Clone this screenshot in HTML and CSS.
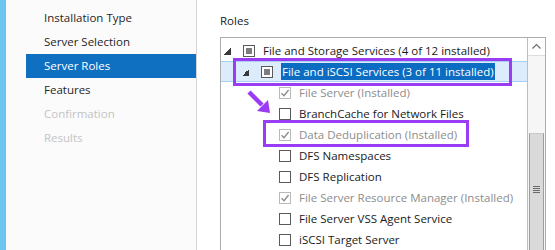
FILE: index.html
```html
<!DOCTYPE html>
<html>
<head>
<meta charset="utf-8">
<link rel="stylesheet" href="styles.css">
</head>
<body>
<div class="wizard">
  <nav class="steps">
    <ul>
      <li class="step">Installation Type</li>
      <li class="step">Server Selection</li>
      <li class="step active">Server Roles</li>
      <li class="step">Features</li>
      <li class="step disabled">Confirmation</li>
      <li class="step disabled">Results</li>
    </ul>
  </nav>
  <main class="content">
    <div class="section-title">Roles</div>
    <div class="tree-box">
      <div class="tree">
        <div class="row lvl0">
          <span class="expander"></span>
          <span class="cb partial"></span>
          <span class="label">File and Storage Services (4 of 12 installed)</span>
        </div>
        <div class="row lvl1 selected">
          <span class="expander"></span>
          <span class="cb partial"></span>
          <span class="label hl">File and iSCSI Services (3 of 11 installed)</span>
        </div>
        <div class="row lvl2 installed">
          <span class="cb checked"><svg viewBox="0 0 12 12"><path d="M2.5 6.2 L5 8.7 L9.6 3" /></svg></span>
          <span class="label">File Server (Installed)</span>
        </div>
        <div class="row lvl2">
          <span class="cb"></span>
          <span class="label">BranchCache for Network Files</span>
        </div>
        <div class="row lvl2 installed">
          <span class="cb checked"><svg viewBox="0 0 12 12"><path d="M2.5 6.2 L5 8.7 L9.6 3" /></svg></span>
          <span class="label">Data Deduplication (Installed)</span>
        </div>
        <div class="row lvl2">
          <span class="cb"></span>
          <span class="label">DFS Namespaces</span>
        </div>
        <div class="row lvl2">
          <span class="cb"></span>
          <span class="label">DFS Replication</span>
        </div>
        <div class="row lvl2 installed">
          <span class="cb checked"><svg viewBox="0 0 12 12"><path d="M2.5 6.2 L5 8.7 L9.6 3" /></svg></span>
          <span class="label">File Server Resource Manager (Installed)</span>
        </div>
        <div class="row lvl2">
          <span class="cb"></span>
          <span class="label">File Server VSS Agent Service</span>
        </div>
        <div class="row lvl2">
          <span class="cb"></span>
          <span class="label">iSCSI Target Server</span>
        </div>
      </div>
      <div class="scrollbar">
        <div class="scroll-btn"><svg viewBox="0 0 17 17"><path d="M4.5 10.5 L8.5 6.5 L12.5 10.5" /></svg></div>
        <div class="track">
          <div class="thumb"><span class="grip"></span></div>
        </div>
      </div>
    </div>
  </main>

  <div class="mark mark-services"></div>
  <div class="mark mark-dedup"></div>
  <svg class="arrow" viewBox="0 0 30 30"><path class="shaft" d="M2 2 L15 15" /><polygon points="10,21 23,23 21,10" /></svg>
</div>
</body>
</html>
```

FILE: styles.css
```css
* { box-sizing: border-box; }
html, body { margin: 0; padding: 0; }
body {
  width: 555px;
  height: 250px;
  overflow: hidden;
  background: #fff;
  font-family: "Segoe UI", "Open Sans", "Noto Sans", sans-serif;
  font-size: 11.5px;
  color: #1a1a1a;
}
.wizard {
  position: relative;
  display: flex;
  height: 250px;
  overflow: hidden;
}
.steps {
  width: 197px;
  flex: none;
  border-left: 6px solid #6cc6ee;
  border-right: 1px solid #d4d4d4;
  background: #fbfbfb;
}
.steps ul {
  list-style: none;
  margin: 0;
  padding: 6px 0 0 20px;
}
.step {
  height: 24px;
  line-height: 24px;
  padding-left: 18px;
  color: #262626;
}
.step.active {
  background: #0f6fc1;
  color: #fff;
}
.step.disabled { color: #c3c3c3; }

.content {
  flex: 1;
  padding: 12px 0 0 23px;
  background: #fff;
}
.section-title {
  line-height: 17px;
  height: 16px;
  color: #1a1a1a;
}
.tree-box {
  margin-top: 9px;
  width: 326px;
  height: 213px;
  border: 1px solid #acacac;
  border-bottom: none;
  display: flex;
}
.tree {
  flex: 1;
  padding-top: 2px;
}
.row {
  height: 21px;
  display: flex;
  align-items: center;
  white-space: nowrap;
}
.row.lvl0 { padding-left: 3px; }
.row.lvl1 { padding-left: 21px; }
.row.lvl2 { padding-left: 58px; }
.row.selected {
  background: #dcecfc;
  border-top: 1px solid #a6d1f5;
  border-bottom: 1px solid #a6d1f5;
}
.expander {
  width: 7px;
  height: 7px;
  margin-right: 12px;
  margin-top: 2px;
  background: linear-gradient(to bottom right, transparent 50%, #3a3a3a 50%);
}
.cb {
  width: 12px;
  height: 12px;
  border: 1px solid #5a5a5a;
  background: #fff;
  margin-right: 8px;
  flex: none;
  display: flex;
  align-items: center;
  justify-content: center;
}
.cb.partial::after {
  content: "";
  width: 6px;
  height: 6px;
  background: #7d7d7d;
}
.cb.checked { border-color: #b9b9b9; }
.cb svg { width: 12px; height: 12px; flex: none; }
.cb svg path { fill: none; stroke: #8c8c8c; stroke-width: 1.4; }
.installed .label { color: #8d8d8d; }
.label.hl {
  background: #0b6cc2;
  color: #fff;
  padding: 0 1px;
  line-height: 17px;
}

.scrollbar {
  width: 18px;
  flex: none;
  border-left: 1px solid #bdbdbd;
  display: flex;
  flex-direction: column;
  background: #f6f6f6;
}
.scroll-btn {
  height: 18px;
  border-bottom: 1px solid #dcdcdc;
  background: #fff;
}
.scroll-btn svg { width: 17px; height: 17px; display: block; }
.scroll-btn svg path { fill: none; stroke: #6f6f6f; stroke-width: 1.2; }
.track {
  flex: 1;
  padding-top: 77px;
  overflow: hidden;
}
.thumb {
  height: 140px;
  margin: 0 1px;
  background: #dadada;
  border: 1px solid #9e9e9e;
  border-top-color: #c8c8c8;
  display: flex;
  justify-content: center;
  padding-top: 52px;
}
.grip {
  width: 7px;
  height: 8px;
  background: repeating-linear-gradient(to bottom, #6b6b6b 0 1px, transparent 1px 2px);
}

.mark {
  position: absolute;
  border: 3px solid #9b3cf5;
}
.mark-services { left: 233px; top: 58px; width: 279px; height: 28px; }
.mark-dedup { left: 263px; top: 120px; width: 206px; height: 27px; }
.arrow {
  position: absolute;
  left: 247px;
  top: 90px;
  width: 30px;
  height: 30px;
}
.arrow .shaft { stroke: #9b3cf5; stroke-width: 4.5; fill: none; }
.arrow polygon { fill: #9b3cf5; }
```
